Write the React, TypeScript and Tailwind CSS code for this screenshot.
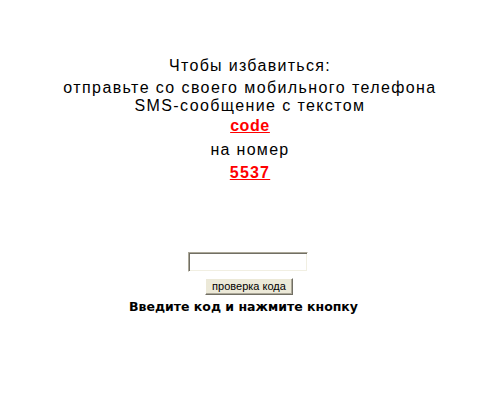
import { useState } from 'react';

// SMS unlock page: instructions up top, code entry form below.
export default function App() {
  const [code, setCode] = useState('');

  return (
    <div className="min-h-[400px] w-full bg-white text-black">
      <div className="flex flex-col items-center pt-[57px] text-center font-['Liberation_Sans',Arial,sans-serif] text-[16px] leading-[18px]">
        <div className="tracking-[1.3px]">Чтобы избавиться:</div>
        <div className="mt-[4px] tracking-[1.4px]">
          отправьте со своего мобильного телефона
          <br />
          SMS-сообщение с текстом
        </div>
        <a href="#" className="mt-[2px] font-bold tracking-[0.6px] text-[#ff0000] underline">
          code
        </a>
        <div className="mt-[6px] tracking-[1.3px]">на номер</div>
        <a href="#" className="mt-[5px] font-bold tracking-[1.2px] text-[#ff0000] underline">
          5537
        </a>

        <form
          className="mt-[70px] flex flex-col items-center"
          onSubmit={(e) => e.preventDefault()}
        >
          <input
            value={code}
            onChange={(e) => setCode(e.target.value)}
            className="mr-[3px] h-[20px] w-[120px] border border-t-[#aca899] border-l-[#aca899] border-r-white border-b-white bg-white px-1 text-[12px] shadow-[inset_1px_1px_0_#716f64,inset_-1px_-1px_0_#f1efe2] outline-none"
          />
          <button
            type="submit"
            className="mt-[6px] mr-[2px] h-[17px] w-[88px] border border-t-white border-l-white border-r-[#716f64] border-b-[#716f64] bg-[#ece9d8] p-0 font-['Liberation_Sans',Tahoma,sans-serif] text-[11px] leading-[13px] shadow-[inset_-1px_-1px_0_#aca899]"
          >
            проверка кода
          </button>
          <div className="mt-[4px] pr-[13px] font-['DejaVu_Sans',Verdana,sans-serif] text-[12.5px] font-bold leading-[16px]">
            Введите код и нажмите кнопку
          </div>
        </form>
      </div>
    </div>
  );
}
